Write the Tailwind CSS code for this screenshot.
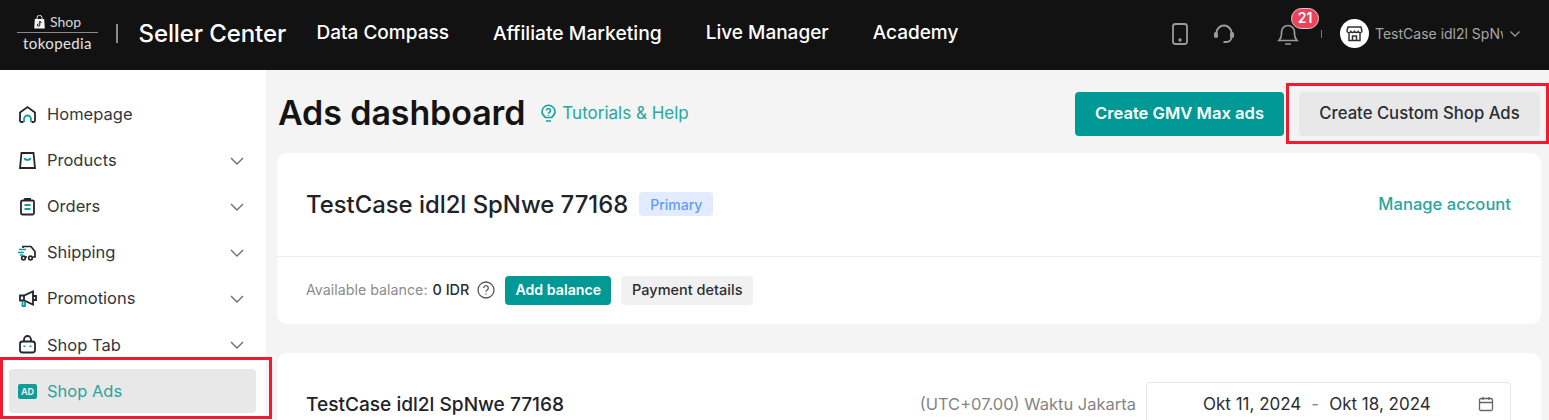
<!DOCTYPE html>
<html><head><meta charset="utf-8"><script src="https://cdn.jsdelivr.net/npm/@tailwindcss/browser@4"></script></head>
<body class="m-0">
<div class="relative w-[1549px] h-[420px] overflow-hidden bg-[#f4f4f4] font-['Inter',sans-serif] text-[#1f1f1f]">
  <header class="h-[70px] bg-[#121212] flex items-center text-white pb-[3px]">
    <div class="w-[116px] shrink-0 flex justify-end pr-[18px]">
      <div class="w-[81px] flex flex-col items-center mt-[-1px]">
        <div class="flex items-center gap-[5px] h-[18px] mb-[1px]">
          <svg width="11" height="14" viewBox="0 0 11 14"><path d="M.8 4h9.400l.6 9.500H.2z" fill="#f4f4f4"/><path d="M3 4V2.800a2.500 2.500 0 0 1 5 0V4" fill="none" stroke="#d9e6e4" stroke-width="1"/><path d="M5.800 6v4a1.200 1.200 0 1 1-1.200-1.200M5.800 6c.2 1 .9 1.500 1.800 1.600" fill="none" stroke="#111" stroke-width="1"/></svg>
          <span class="font-['Lato',sans-serif] text-[14px] leading-none text-[#d8d8d8]">Shop</span>
        </div>
        <div class="w-full h-px bg-[#8a8a8a]"></div>
        <span class="font-['Lato',sans-serif] text-[15px] leading-[21px] tracking-[0.4px] text-[#e4e4e4]">tokopedia</span>
      </div>
    </div>
    <div class="w-[1.500px] h-[19px] bg-[#8a8a8a] mr-[21px]"></div>
    <span class="text-[24px] font-medium tracking-[-0.1px] w-[178px] shrink-0">Seller Center</span>
    <nav class="flex gap-[44px] text-[19px] font-medium">
      <span>Data Compass</span><span class="text-[19.300px]">Affiliate Marketing</span><span>Live Manager</span><span>Academy</span>
    </nav>
    <div class="ml-auto flex items-center text-[#9a9a9a]">
      <svg class="mr-[24px]" width="18" height="24" viewBox="0 0 18 24" fill="none" stroke="#9a9a9a" stroke-width="1.800"><rect x="2" y="2" width="14" height="20" rx="2.500"/><circle cx="9" cy="18" r=".8" fill="#9a9a9a"/></svg>
      <svg class="mr-[42px]" width="22" height="22" viewBox="0 0 22 22" fill="none" stroke="#9a9a9a" stroke-width="2"><path d="M3.500 10a7.500 7.500 0 0 1 15 0v4a5 5 0 0 1-5 5h-3"/><rect x="1" y="9" width="4" height="6" rx="1.800" fill="#9a9a9a" stroke="none"/><rect x="17" y="9" width="4" height="6" rx="1.800" fill="#9a9a9a" stroke="none"/></svg>
      <div class="relative mr-[22px]">
        <svg width="22" height="24" viewBox="0 0 22 24" fill="none" stroke="#9a9a9a" stroke-width="1.700"><path d="M2 18.500h18c-2-2-2.500-3-2.500-6.500V10a6.500 6.500 0 0 0-13 0v2c0 3.500-.5 4.500-2.500 6.500zM8 22h6"/></svg>
        <div class="absolute left-[14px] top-[-14px] w-[28px] h-[21px] rounded-full bg-[#e8445a] border border-[#f2c6cc] text-[14px] font-semibold text-white flex items-center justify-center leading-none">21</div>
      </div>
      <div class="w-px h-[8px] bg-[#777] mr-[18px]"></div>
      <div class="w-[29px] h-[29px] rounded-full bg-white flex items-center justify-center mr-[6px]">
        <svg width="17" height="17" viewBox="0 0 17 17" fill="none" stroke="#333" stroke-width="1.500"><path d="M2 2h13l1 4a2 2 0 0 1-3.800.5 2.200 2.200 0 0 1-3.700 0 2.200 2.200 0 0 1-3.700 0A2 2 0 0 1 1 6zM3 8v7.500h11V8M6.500 15v-4h4v4"/></svg>
      </div>
      <span class="w-[128px] overflow-hidden whitespace-nowrap text-[14px] text-[#a6a6a6]">TestCase idl2l SpNwe 77168</span>
      <svg class="ml-[6px] mr-[28px]" width="12" height="8" viewBox="0 0 12 8" fill="none" stroke="#9a9a9a" stroke-width="1.300"><path d="M1.500 1.500 6 6l4.500-4.500"/></svg>
    </div>
  </header>
  <div class="flex h-[350px]">
    <aside class="w-[266px] shrink-0 bg-white pt-[21px] px-[9px] text-[16.500px] text-[#33373d]">
      <div class="h-[46px] flex items-center pl-[9px]">
        <svg class="w-[19px] mr-[10px]" width="19" height="19" viewBox="0 0 19 19" fill="none" stroke="#23262b" stroke-width="1.800"><path d="M5.500 17H3.500A1.500 1.500 0 0 1 2 15.500V7.500L9.500 2 17 7.500v8a1.500 1.500 0 0 1-1.500 1.500h-2"/><path d="M6 17v-3a3.500 3.500 0 0 1 7 0v3" stroke="#0f9d98"/></svg>
        <span class="flex-1">Homepage</span>
      </div>
      <div class="h-[46px] flex items-center pl-[9px]">
        <svg class="w-[19px] mr-[10px]" width="19" height="19" viewBox="0 0 19 19" fill="none" stroke="#23262b" stroke-width="1.800"><path d="M3.500 2h12l1.500 15H2z"/><path d="M6.500 7c.5 2.500 5.500 2.500 6 0" stroke="#0f9d98"/></svg>
        <span class="flex-1">Products</span>
        <svg class="mr-[12px] mt-[2px]" width="16" height="10" viewBox="0 0 16 10" fill="none" stroke="#6b6e72" stroke-width="1.400"><path d="M2 2l6 6 6-6"/></svg>
      </div>
      <div class="h-[46px] flex items-center pl-[9px]">
        <svg class="w-[19px] mr-[10px]" width="19" height="19" viewBox="0 0 19 19" fill="none" stroke="#23262b" stroke-width="1.800"><rect x="3" y="3.500" width="13" height="14" rx="1.500"/><path d="M7 3.500V2h5v1.500"/><path d="M6.500 8h6M6.500 12h6" stroke="#0f9d98"/></svg>
        <span class="flex-1">Orders</span>
        <svg class="mr-[12px] mt-[2px]" width="16" height="10" viewBox="0 0 16 10" fill="none" stroke="#6b6e72" stroke-width="1.400"><path d="M2 2l6 6 6-6"/></svg>
      </div>
      <div class="h-[46px] flex items-center pl-[9px]">
        <svg class="w-[19px] mr-[10px]" width="19" height="19" viewBox="0 0 19 19" fill="none" stroke="#23262b" stroke-width="1.700"><path d="M5 5V3.500h8l4 5V14h-2M9 14h-2"/><circle cx="5.500" cy="15" r="1.800"/><circle cx="12.500" cy="15" r="1.800"/><path d="M1 6.500h7M0 9.500h6M2 12h3" stroke="#0f9d98"/></svg>
        <span class="flex-1">Shipping</span>
        <svg class="mr-[12px] mt-[2px]" width="16" height="10" viewBox="0 0 16 10" fill="none" stroke="#6b6e72" stroke-width="1.400"><path d="M2 2l6 6 6-6"/></svg>
      </div>
      <div class="h-[46px] flex items-center pl-[9px]">
        <svg class="w-[19px] mr-[10px]" width="19" height="19" viewBox="0 0 19 19" fill="none" stroke="#23262b" stroke-width="1.800"><path d="M2 6.500h4l9-4v13l-9-4H2zM6 6.500v5M15 7h3v4h-3"/><path d="M4.500 12v5h2.500v-4.500" stroke="#0f9d98"/></svg>
        <span class="flex-1">Promotions</span>
        <svg class="mr-[12px] mt-[2px]" width="16" height="10" viewBox="0 0 16 10" fill="none" stroke="#6b6e72" stroke-width="1.400"><path d="M2 2l6 6 6-6"/></svg>
      </div>
      <div class="h-[46px] flex items-center pl-[9px]">
        <svg class="w-[19px] mr-[10px]" width="19" height="19" viewBox="0 0 19 19" fill="none" stroke="#23262b" stroke-width="1.800"><rect x="2" y="6.500" width="15" height="11" rx="2.500"/><path d="M6 6.500V4.500a3.500 3.500 0 0 1 7 0v2"/><path d="M6.500 10.500v1.500M12.500 10.500v1.500" stroke="#0f9d98" stroke-width="2"/></svg>
        <span class="flex-1 pt-[2px]">Shop Tab</span>
        <svg class="mr-[12px] mt-[2px]" width="16" height="10" viewBox="0 0 16 10" fill="none" stroke="#6b6e72" stroke-width="1.400"><path d="M2 2l6 6 6-6"/></svg>
      </div>
      <div class="h-[44px] mt-[2px] flex items-center pl-[9px] w-[247px] rounded-[4px] bg-[#e8e8e8] text-[#2aa4a0]">
        <span class="w-[19px] h-[15px] mr-[10px] rounded-[2px] bg-[#0f9d98] text-[#e8e8e8] text-[9px] font-bold leading-[15px] text-center">AD</span>
        <span class="flex-1">Shop Ads</span>
      </div>
    </aside>
    <main class="flex-1 pl-[11px] pr-[8px] min-w-0">
      <div class="h-[83px] flex items-center pt-[4px]">
        <h1 class="text-[34px] font-semibold text-[#141414] leading-none ml-[1px] mb-[2px] tracking-[-0.1px]">Ads dashboard</h1>
        <svg class="ml-[16px] mr-[6px]" width="15" height="19" viewBox="0 0 15 19" fill="none" stroke="#17a39d" stroke-width="1.600"><path d="M4.500 13.500C2.500 12 1 10.500 1 7.800a6.500 6.500 0 0 1 13 0c0 2.700-1.500 4.200-3.500 5.700zM5 17h5"/><path d="M5.500 6.500a2 2 0 1 1 3 1.700c-.7.400-1 .8-1 1.500M7.500 11v.8"/></svg>
        <span class="text-[17px] text-[#28a6a1]">Tutorials &amp; Help</span>
        <button class="ml-auto w-[209px] h-[44px] rounded-[4px] bg-[#009995] text-white text-[16.600px] font-semibold">Create GMV Max ads</button>
        <button class="ml-[15px] mr-[1px] w-[241px] h-[44px] rounded-[4px] bg-[#e8e8e8] text-[#2b2d33] text-[16.700px] font-medium">Create Custom Shop Ads</button>
      </div>
      <section class="bg-white rounded-[10px] h-[171px]">
        <div class="h-[104px] flex items-center pl-[29px] pr-[30px] border-b border-[#eeeeee]">
          <span class="text-[23.850px] font-medium text-[#212329]">TestCase idl2l SpNwe 77168</span>
          <span class="ml-[11px] mb-[1px] w-[74px] h-[24px] rounded-[4px] bg-[#e2ebff] text-[#5c9dff] text-[14px] font-medium flex items-center justify-center">Primary</span>
          <span class="ml-auto text-[16.600px] font-medium text-[#28a6a1]">Manage account</span>
        </div>
        <div class="flex items-center h-[66px] pl-[29px]">
          <span class="text-[14.250px] text-[#8c8c8c]">Available balance:</span>
          <span class="ml-[5px] text-[14.400px] font-medium text-[#2b2d33]">0 IDR</span>
          <svg class="ml-[8px]" width="18" height="18" viewBox="0 0 18 18" fill="none" stroke="#555" stroke-width="1.300"><circle cx="9" cy="9" r="8"/><path d="M6.700 7a2.300 2.300 0 1 1 3.500 2c-.8.500-1.200.9-1.200 1.800M9 12.500v1"/></svg>
          <button class="ml-[10px] w-[106px] h-[29px] rounded-[4px] bg-[#009995] text-white text-[14.200px] font-semibold">Add balance</button>
          <button class="ml-[10px] w-[132px] h-[29px] rounded-[4px] bg-[#f1f1f1] text-[#2b2d33] text-[14.500px] font-medium">Payment details</button>
        </div>
      </section>
      <section class="bg-white rounded-[10px] h-[120px] mt-[29px] flex items-start pl-[29px] pr-[30px] pt-[29px]">
        <span class="text-[19.100px] font-medium text-[#212329] leading-[44px]">TestCase idl2l SpNwe 77168</span>
        <span class="ml-auto mr-[10px] text-[16.500px] text-[#858585] leading-[44px]">(UTC+07.00) Waktu Jakarta</span>
        <div class="w-[365px] h-[60px] border border-[#e6e6e6] rounded-[4px] flex items-start text-[17px] text-[#2b2d33] pl-[56px] pr-[16px] pt-[10px]">
          <span class="leading-[22px]">Okt 11, 2024</span><span class="mx-[10px] leading-[22px] text-[#888]">-</span><span class="leading-[22px]">Okt 18, 2024</span>
          <svg class="ml-auto mt-[3px]" width="16" height="16" viewBox="0 0 16 16" fill="none" stroke="#666" stroke-width="1.300"><rect x="1.500" y="2.500" width="13" height="12" rx="1.500"/><path d="M1.500 6.500h13M5 1v3M11 1v3"/></svg>
        </div>
      </section>
    </main>
  </div>
  <div class="absolute left-[1286px] top-[83px] w-[263px] h-[61px] border-[3px] border-[#ee1c2e]"></div>
  <div class="absolute left-0 top-[357px] w-[272px] h-[62px] border-[3px] border-[#ee1c2e]"></div>
</div>
</body></html>
